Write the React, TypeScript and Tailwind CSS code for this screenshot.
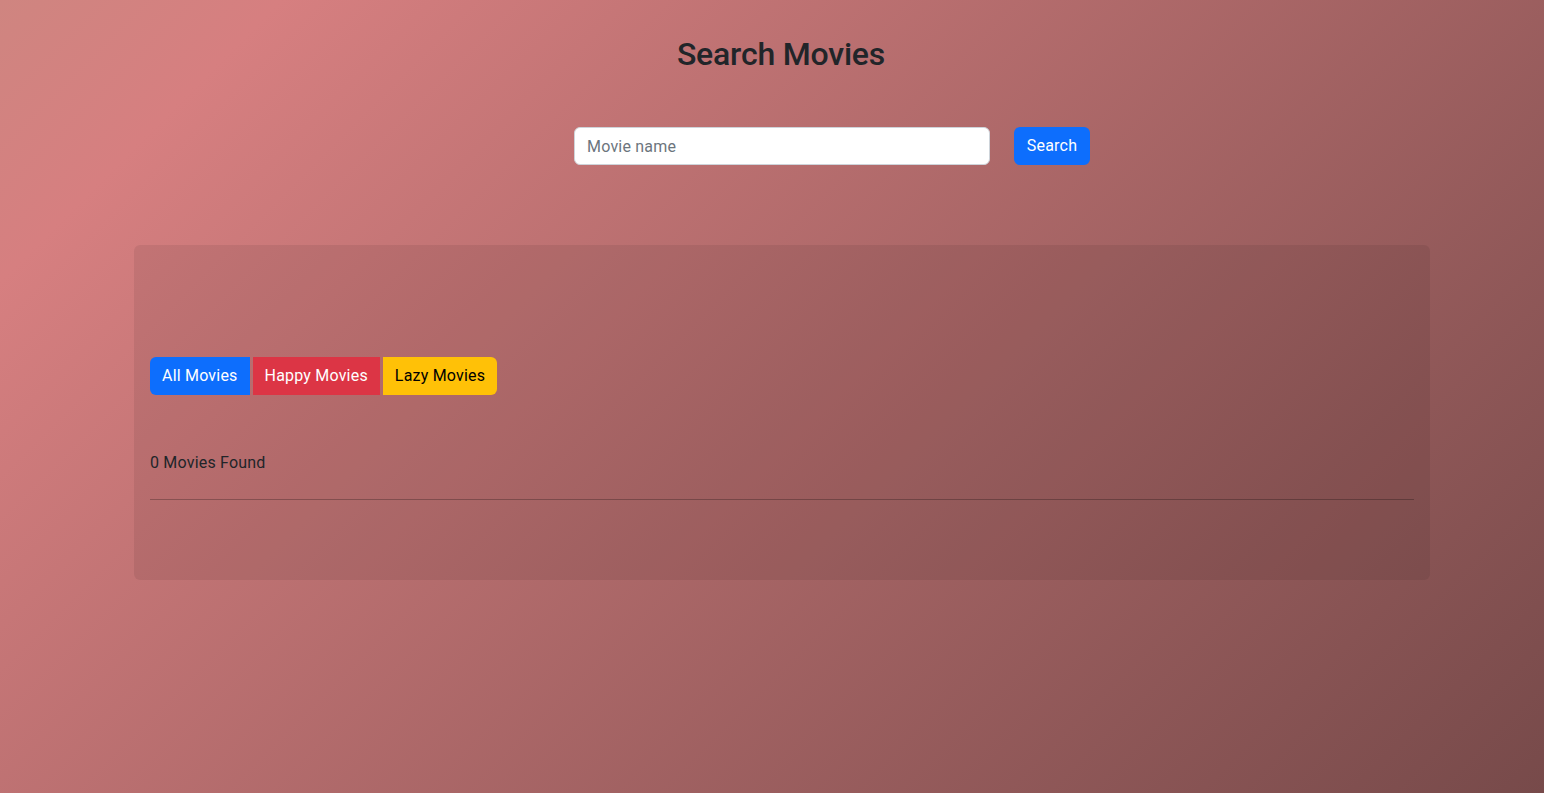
export default function App() {
  return (
    <div className="min-h-screen w-full bg-[linear-gradient(135deg,#cf8580_0%,#d67f80_12%,#774a4a_100%)] font-['Roboto','Liberation_Sans',sans-serif] text-[#212529]">
      <h2 className="pl-[18px] pt-[35px] text-center text-[32px] leading-[1.2] font-medium tracking-[-0.2px]">Search Movies</h2>

      <div className="mt-[54px] flex justify-center gap-6 pl-[120px] tracking-[0.2px]">
        <input
          type="text"
          placeholder="Movie name"
          className="h-[38px] w-[416px] rounded-md border border-[#ced4da] bg-white px-3 text-base text-[#212529] outline-none placeholder:text-[#6c757d]"
        />
        <button className="h-[38px] w-[76px] rounded-md bg-[#0d6efd] text-base text-white">Search</button>
      </div>

      <div className="mt-[80px] ml-[134px] h-[335px] w-[1296px] rounded-md bg-black/[0.07] px-4 pt-[112px] tracking-[0.2px]">
        <div className="flex gap-[3px]">
          <button className="h-[38px] rounded-l-md bg-[#0d6efd] px-3 text-base text-white">All Movies</button>
          <button className="h-[38px] bg-[#dc3545] px-3 text-base text-white">Happy Movies</button>
          <button className="h-[38px] rounded-r-md bg-[#ffc107] px-3 text-base text-black">Lazy Movies</button>
        </div>
        <p className="mt-[56px] text-base leading-6">0 Movies Found</p>
        <hr className="mt-[24px] border-t border-black/25" />
      </div>
    </div>
  )
}
